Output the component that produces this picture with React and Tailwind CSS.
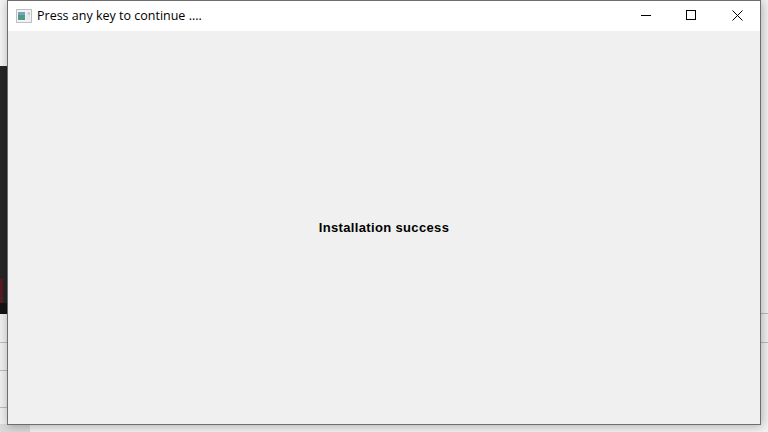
import React from "react";

function AppIcon() {
  return (
    <svg width="16" height="14" viewBox="0 0 16 14" className="shrink-0">
      <rect x="0.5" y="0.5" width="15" height="13" fill="#f2f2f2" stroke="#c0c0c0" />
      <rect x="2" y="3" width="7" height="8" fill="#4f9a88" />
      <rect x="2" y="3" width="7" height="3" fill="#7aa0c0" />
      <rect x="10" y="3" width="4" height="8" fill="#e4ecea" />
      <rect x="12" y="3" width="2" height="3" fill="#c4d0d4" />
    </svg>
  );
}

export default function App() {
  return (
    <div className="relative w-[768px] h-[432px] overflow-hidden bg-[#f3f3f3] font-['Liberation_Sans',sans-serif]">
      <div className="flex h-full justify-between">
        <div className="w-[30px] h-full flex flex-col bg-[#f0f0f0]">
          <div className="h-[66px] bg-[#f4f4f4]" />
          <div className="h-[213px] bg-[#262626]" />
          <div className="h-[24px] bg-[#262626]">
            <div className="w-[3px] h-full bg-[#5a1a22]" />
          </div>
          <div className="h-[11px] bg-[#141414]" />
          <div className="h-[29px] border-b border-[#bdbdbd]" />
          <div className="h-[28px] border-b border-[#bdbdbd]" />
          <div className="h-[37px] border-b border-[#bdbdbd]" />
          <div className="flex-1 mt-[16px] bg-[#dadada]" />
        </div>
        <div className="w-[7px] h-full flex flex-col">
          <div className="h-[314px] border-b border-[#bdbdbd]" />
          <div className="h-[29px] border-b border-[#bdbdbd]" />
        </div>
      </div>
      <div className="absolute left-[7px] top-0 w-[754px] h-[425px] flex flex-col border border-[#6e6e6e] shadow-[1px_1px_10px_rgba(0,0,0,0.3)] bg-[#f0f0f0]">
        <div className="h-[30px] bg-white flex items-center pl-[8px] text-black">
          <AppIcon />
          <span className="ml-[5px] text-[12.5px] font-['Open_Sans',sans-serif]">Press any key to continue ....</span>
          <div className="ml-auto flex items-center">
            <div className="w-[46px] h-[30px] flex items-center justify-center pl-[1px]">
              <svg width="10" height="10" viewBox="0 0 10 10"><path d="M0 4.5H10" stroke="#000" /></svg>
            </div>
            <div className="w-[46px] h-[30px] flex items-center justify-center pb-[2px]">
              <svg width="10" height="10" viewBox="0 0 10 10"><rect x="0.5" y="0.5" width="9" height="9" fill="none" stroke="#000" /></svg>
            </div>
            <div className="w-[46px] h-[30px] flex items-center justify-center pb-[2px]">
              <svg width="11" height="11" viewBox="0 0 11 11"><path d="M0.5 0.5L10.5 10.5M10.5 0.5L0.5 10.5" stroke="#000" /></svg>
            </div>
          </div>
        </div>
        <div className="flex-1 flex items-center justify-center">
          <span className="text-[13px] font-bold text-black tracking-[0.35px]">Installation success</span>
        </div>
      </div>
    </div>
  );
}
